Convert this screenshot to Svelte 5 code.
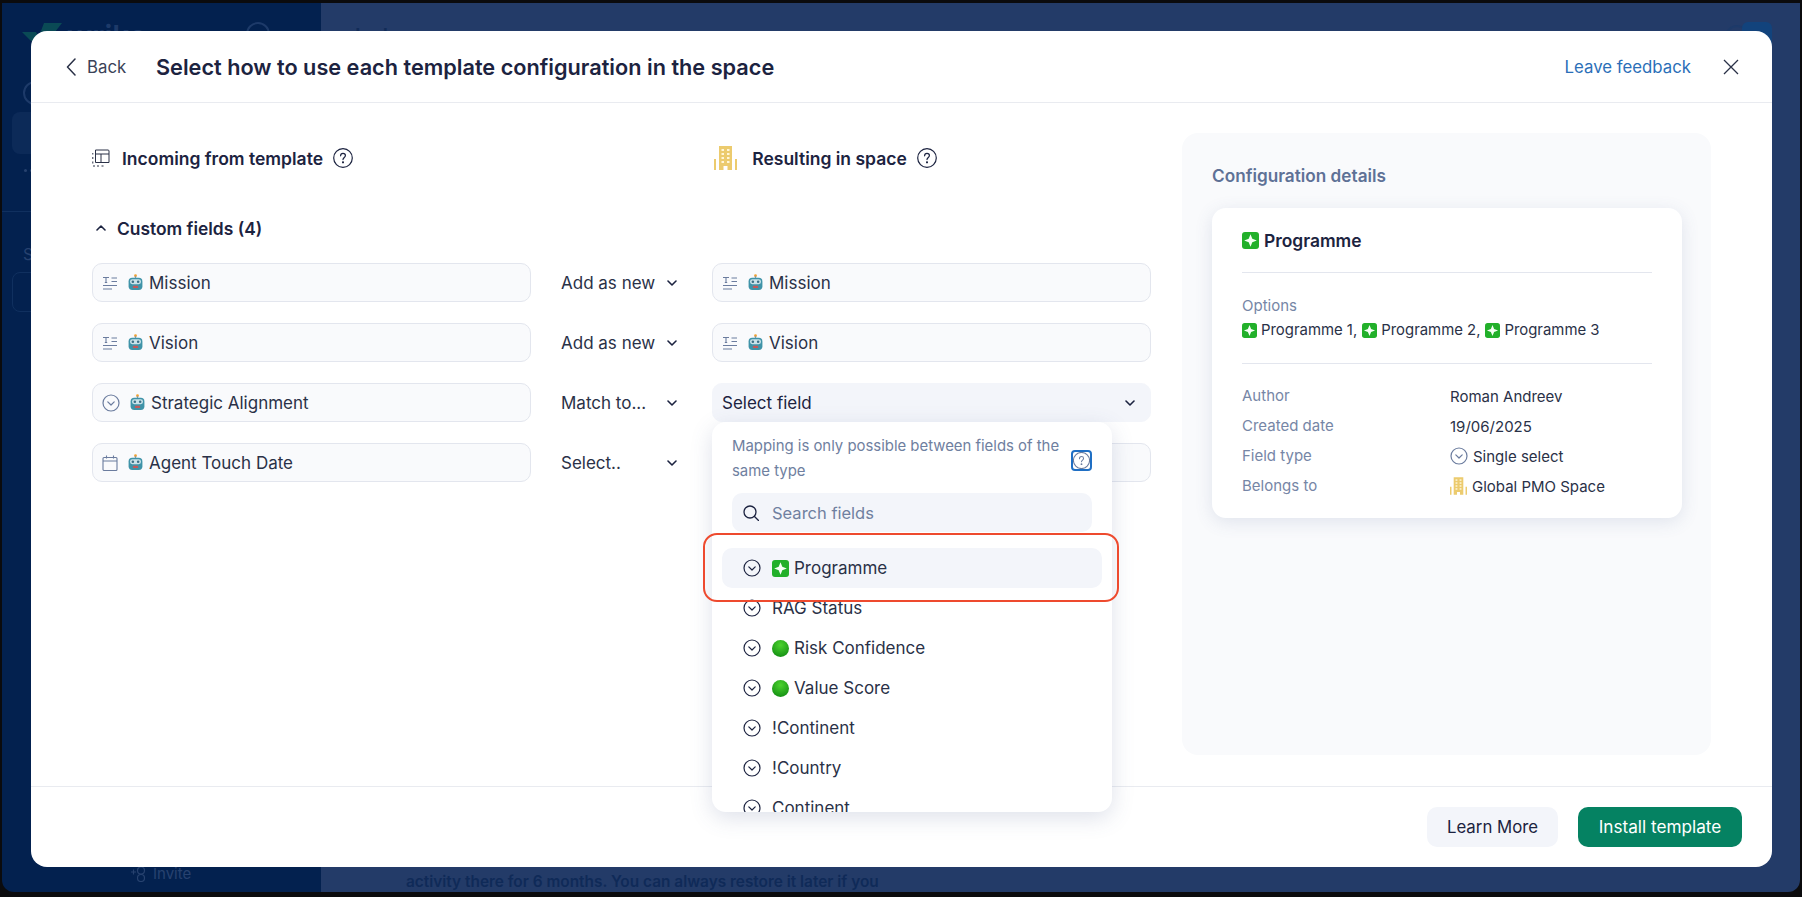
<script lang="ts">
  type Field = { name: string, kind: string, action: string };

  const fields: Field[] = [
    { name: "Mission", kind: "text", action: "Add as new" },
    { name: "Vision", kind: "text", action: "Add as new" },
    { name: "Strategic Alignment", kind: "select", action: "Match to..." },
    { name: "Agent Touch Date", kind: "date", action: "Select.." }
  ];

  const options = [
    { label: "Programme", emoji: "spark", active: true },
    { label: "RAG Status", emoji: "" },
    { label: "Risk Confidence", emoji: "dot" },
    { label: "Value Score", emoji: "dot" },
    { label: "!Continent", emoji: "" },
    { label: "!Country", emoji: "" },
    { label: "Continent", emoji: "" }
  ];

  const details = [
    { label: "Author", value: "Roman Andreev" },
    { label: "Created date", value: "19/06/2025" },
    { label: "Field type", value: "Single select", icon: "select" },
    { label: "Belongs to", value: "Global PMO Space", icon: "building" }
  ];
</script>

{#snippet robot()}
  <svg class="emoji" viewBox="0 0 16 16" width="17" height="17">
    <circle cx="8" cy="1.6" r="1.3" fill="#f0a030"/>
    <rect x="7.4" y="2" width="1.2" height="2" fill="#8a99a8"/>
    <rect x="1.5" y="3.6" width="13" height="11.4" rx="3.4" fill="#3f93a8"/>
    <rect x="2.8" y="5" width="10.4" height="4.6" rx="2.2" fill="#c9e3ea"/>
    <circle cx="5.5" cy="7.3" r="1.2" fill="#3b6f86"/>
    <circle cx="10.5" cy="7.3" r="1.2" fill="#3b6f86"/>
    <rect x="5.5" y="11" width="5" height="2.2" rx="0.8" fill="#c4595a"/>
  </svg>
{/snippet}

{#snippet spark(size)}
  <svg class="emoji" viewBox="0 0 17 17" width={size} height={size}>
    <rect width="17" height="17" rx="3" fill="#22b02a"/>
    <path d="M8.5 2.2 L10.3 6.7 L14.8 8.5 L10.3 10.3 L8.5 14.8 L6.7 10.3 L2.2 8.5 L6.7 6.700 Z" fill="#f4fff4"/>
  </svg>
{/snippet}

{#snippet dot()}
  <svg class="emoji" viewBox="0 0 17 17" width="17" height="17">
    <defs>
      <radialGradient id="dotfill" cx="50%" cy="30%" r="75%">
        <stop offset="0" stop-color="#4cd32e"/>
        <stop offset="1" stop-color="#118c12"/>
      </radialGradient>
    </defs>
    <circle cx="8.5" cy="8.5" r="8.5" fill="url(#dotfill)"/>
  </svg>
{/snippet}

{#snippet building(w, h)}
  <svg class="emoji" viewBox="0 0 23 24" width={w} height={h}>
    <path fill="#eccb6e" d="M5 0h13v24h-4.500v-4h-4v4H5z"/>
    <path fill="#eccb6e" d="M0 13h2v11H0zM21 13h2v11h-2z"/>
    <g fill="#fff6d8">
      <rect x="7.500" y="3" width="2.500" height="2"/><rect x="13" y="3" width="2.500" height="2"/>
      <rect x="7.500" y="7" width="2.500" height="2"/><rect x="13" y="7" width="2.500" height="2"/>
      <rect x="7.500" y="11" width="2.500" height="2"/><rect x="13" y="11" width="2.500" height="2"/>
      <rect x="7.500" y="15" width="2.500" height="2"/><rect x="13" y="15" width="2.500" height="2"/>
    </g>
  </svg>
{/snippet}

{#snippet selectIcon(color)}
  <svg class="emoji" viewBox="0 0 18 18" width="18" height="18" fill="none" stroke={color} stroke-width="1.200">
    <circle cx="9" cy="9" r="8"/>
    <path d="M5.800 7.800 L9 11 L12.200 7.800" stroke-linecap="round" stroke-linejoin="round"/>
  </svg>
{/snippet}

{#snippet kindIcon(kind)}
  {#if kind == "text"}
    <svg class="emoji" viewBox="0 0 16 16" width="16" height="16" fill="none" stroke="#6b7c9e" stroke-width="1.100">
      <path d="M1 2.500h6M4 2.500v5M2.800 7.500h2.400M9.500 3h5.500M9.500 6.500h5.500M1 10.500h14M1 14h9"/>
    </svg>
  {:else if kind == "select"}
    {@render selectIcon("#6b7c9e")}
  {:else}
    <svg class="emoji" viewBox="0 0 16 16" width="16" height="16" fill="none" stroke="#6b7c9e" stroke-width="1.100">
      <rect x="1" y="2.500" width="14" height="13" rx="1"/>
      <path d="M1 6h14M4.500 0.500v3M11.500 0.500v3"/>
    </svg>
  {/if}
{/snippet}

{#snippet chevron()}
  <svg class="chev" viewBox="0 0 10 6" width="10" height="6" fill="none" stroke="#1c2340" stroke-width="1.600">
    <path d="M1 1 L5 5 L9 1" stroke-linecap="round" stroke-linejoin="round"/>
  </svg>
{/snippet}

{#snippet help(size)}
  <svg class="emoji help" viewBox="0 0 20 20" width={size} height={size} fill="none" stroke="#1c2340" stroke-width="1.200">
    <circle cx="10" cy="10" r="9.300"/>
    <path d="M7.600 7.800 C7.600 6.200 8.800 5.400 10 5.400 C11.300 5.400 12.400 6.300 12.400 7.600 C12.400 9.400 10 9.500 10 11.600" stroke-linecap="round"/>
    <circle cx="10" cy="14.300" r="0.500" fill="#1c2340"/>
  </svg>
{/snippet}

<div class="screen">
  <div class="desktop">
    <aside class="sidebar">
      <svg class="check" viewBox="0 0 40 18" width="40" height="18"><path d="M0 9h14l5 9H9zM22 0h18L26 18h-6l-3-5z" fill="#0a4a55"/></svg>
      <span class="wordmark">wrike</span>
      <span class="ghost-circle top-icon"></span>
      <span class="ghost-circle side-circle"></span>
      <div class="side-bell"></div>
      <div class="side-dots"></div>
      <div class="side-rule"></div>
      <span class="side-s">S</span>
      <div class="side-box"></div>
      <div class="side-invite">
        <svg viewBox="0 0 16 16" width="16" height="16" fill="none" stroke="#27426f" stroke-width="1.200">
          <path d="M0 6h5M2.500 3.500v5"/>
          <circle cx="10" cy="4.500" r="3.500"/>
          <circle cx="10" cy="12" r="3.500"/>
        </svg>
        <span>Invite</span>
      </div>
    </aside>
    <main class="backdrop">
      <span class="crumb">Iob</span>
      <div class="notice">activity there for 6 months. You can always restore it later if you</div>
      <span class="ghost-circle top-help"></span>
      <div class="avatar"></div>
    </main>
  </div>

  <div class="modal">
    <header class="top">
      <button class="back">
        <svg viewBox="0 0 10 18" width="10" height="18" fill="none" stroke="#2a3147" stroke-width="1.500">
          <path d="M9 1 L1.500 9 L9 17" stroke-linecap="round" stroke-linejoin="round"/>
        </svg>
        <span>Back</span>
      </button>
      <h1>Select how to use each template configuration in the space</h1>
      <a class="feedback" href="#top">Leave feedback</a>
      <svg class="close" viewBox="0 0 16 16" width="16" height="16" fill="none" stroke="#2a3147" stroke-width="1.300">
        <path d="M1 1 L15 15 M15 1 L1 15"/>
      </svg>
    </header>

    <div class="body">
      <section class="mapping">
        <div class="heads">
          <div class="head">
            <svg class="emoji tpl" viewBox="0 0 18 18" width="18" height="18" fill="none" stroke="#2a3147" stroke-width="1">
              <path d="M3.500 1h12.500a1 1 0 0 1 1 1v11.500h-13.500zM3.500 5h13.500M9 5v8.500"/>
              <path d="M0.800 4v1.500M0.800 8v2M0.800 12.500v2M1 17h2M5 17h2M9.500 17h2" />
            </svg>
            <span>Incoming from template</span>
            {@render help(20)}
          </div>
          <div class="gap"></div>
          <div class="head result">
            {@render building(23, 24)}
            <span>Resulting in space</span>
            {@render help(20)}
          </div>
        </div>

        <div class="group">
          <svg viewBox="0 0 10 6" width="10" height="6" fill="none" stroke="#1c2340" stroke-width="1.600">
            <path d="M1 5 L5 1 L9 5" stroke-linecap="round" stroke-linejoin="round"/>
          </svg>
          <span>Custom fields (4)</span>
        </div>

        <div class="rows">
          {#each fields as f, i}
            <div class="row">
              <div class="field">
                {@render kindIcon(f.kind)}
                {@render robot()}
                <span>{f.name}</span>
              </div>
              <div class="action">
                <span>{f.action}</span>
                {@render chevron()}
              </div>
              {#if i == 2}
                <div class="field picker">
                  <span>Select field</span>
                  {@render chevron()}
                </div>
              {:else}
                <div class="field">
                  {#if i != 3}
                    {@render kindIcon(f.kind)}
                    {@render robot()}
                    <span>{f.name}</span>
                  {/if}
                </div>
              {/if}
            </div>
          {/each}
        </div>
      </section>

      <aside class="details">
        <h2>Configuration details</h2>
        <div class="card">
          <div class="card-title">
            {@render spark(17)}
            <span>Programme</span>
          </div>
          <div class="opts">
            <div class="label">Options</div>
            <div class="opt-line">
              {@render spark(15)}<span>Programme 1,</span>
              {@render spark(15)}<span>Programme 2,</span>
              {@render spark(15)}<span>Programme 3</span>
            </div>
          </div>
          <div class="meta">
            {#each details as d}
              <div class="label">{d.label}</div>
              <div class="value">
                {#if d.icon == "select"}
                  {@render selectIcon("#6b7c9e")}
                {:else if d.icon == "building"}
                  {@render building(17, 18)}
                {/if}
                <span>{d.value}</span>
              </div>
            {/each}
          </div>
        </div>
      </aside>
    </div>

    <footer class="bottom">
      <button class="btn ghost">Learn More</button>
      <button class="btn primary">Install template</button>
    </footer>

    <div class="dropdown">
      <div class="hint">
        <p>Mapping is only possible between fields of the same type</p>
        <span class="hint-help">
          <svg viewBox="0 0 20 20" width="17" height="17" fill="none" stroke="#6b7c9e" stroke-width="1.200">
            <circle cx="10" cy="10" r="9.500"/>
            <path d="M7.600 7.800 C7.600 6.200 8.800 5.400 10 5.400 C11.300 5.400 12.400 6.300 12.400 7.600 C12.400 9.400 10 9.500 10 11.600" stroke-linecap="round"/>
            <circle cx="10" cy="14.300" r="0.500" fill="#6b7c9e"/>
          </svg>
        </span>
      </div>
      <div class="search">
        <svg viewBox="0 0 16 16" width="16" height="16" fill="none" stroke="#1c2340" stroke-width="1.300">
          <circle cx="7" cy="7" r="6"/>
          <path d="M11.500 11.500 L15.500 15.500" stroke-linecap="round"/>
        </svg>
        <span>Search fields</span>
      </div>
      <div class="list">
        {#each options as o}
          <div class="option" class:active={o.active}>
            {@render selectIcon("#1c2340")}
            {#if o.emoji == "spark"}
              {@render spark(17)}
            {:else if o.emoji == "dot"}
              {@render dot()}
            {/if}
            <span>{o.label}</span>
          </div>
        {/each}
      </div>
    </div>

    <div class="callout"></div>
  </div>
</div>

<style>
  :global(body) {
    background: #0b0b0d;
    font-family: Inter, "Liberation Sans", sans-serif;
    overflow: hidden;
  }

  .screen {
    position: relative;
    width: 1802px;
    height: 897px;
    padding: 3px 2px 5px 2px;
    box-sizing: border-box;
    background: #0b0b0d;
  }

  .desktop {
    display: flex;
    height: 100%;
    border-radius: 0 0 12px 12px;
    overflow: hidden;
  }

  .sidebar {
    width: 319px;
    background: #03214f;
    position: relative;
    flex: none;
  }

  .check {
    position: absolute;
    left: 20px;
    top: 20px;
  }

  .wordmark {
    position: absolute;
    left: 65px;
    top: 18px;
    color: #1d3a69;
    font-size: 30px;
    font-weight: 600;
    line-height: 1;
  }

  .ghost-circle {
    position: absolute;
    width: 24px;
    height: 24px;
    box-sizing: border-box;
    border: 2px solid #1d3a69;
    border-radius: 50%;
  }

  .top-icon {
    left: 244px;
    top: 19px;
  }

  .side-circle {
    left: 21px;
    top: 78px;
  }

  .side-bell {
    position: absolute;
    left: 10px;
    top: 109px;
    width: 40px;
    height: 42px;
    border-radius: 8px;
    background: #0c2a58;
  }

  .side-dots {
    position: absolute;
    left: 22px;
    top: 166px;
    width: 3px;
    height: 3px;
    border-radius: 50%;
    background: #27426f;
    box-shadow: 6px 0 #27426f;
  }

  .side-rule {
    position: absolute;
    left: 0;
    top: 208px;
    width: 100%;
    height: 1px;
    background: #10305f;
  }

  .side-s {
    position: absolute;
    left: 21px;
    top: 241px;
    color: #27426f;
    font-size: 16px;
  }

  .side-box {
    position: absolute;
    left: 10px;
    top: 269px;
    width: 40px;
    height: 40px;
    box-sizing: border-box;
    border: 1px solid #10305f;
    border-radius: 8px;
  }

  .side-invite {
    position: absolute;
    left: 129px;
    top: 861px;
    display: flex;
    align-items: center;
    gap: 6px;
    color: #27426f;
    font-size: 15px;
  }

  .backdrop {
    flex: 1;
    background: #233b68;
    position: relative;
  }

  .crumb {
    position: absolute;
    left: 34px;
    top: 21px;
    color: #122c58;
    font-size: 20px;
    font-weight: 600;
    letter-spacing: 5px;
  }

  .notice {
    position: absolute;
    left: 85px;
    top: 869px;
    font-size: 15.400px;
    font-weight: 600;
    color: #0f2a58;
    white-space: nowrap;
  }

  .top-help {
    right: 51px;
    top: 22px;
  }

  .avatar {
    position: absolute;
    right: 28px;
    top: 19px;
    width: 30px;
    height: 30px;
    border-radius: 6px;
    background: #12437c;
  }

  .modal {
    position: absolute;
    left: 31px;
    top: 31px;
    width: 1741px;
    height: 836px;
    background: #fff;
    border-radius: 16px;
    display: flex;
    flex-direction: column;
    color: #1c2340;
    overflow: hidden;
  }

  .top {
    height: 71px;
    flex: none;
    display: flex;
    align-items: center;
    padding: 0 33px 0 35px;
    border-bottom: 1px solid #e9ebf0;
  }

  .back {
    display: flex;
    align-items: center;
    gap: 11px;
    border: 0;
    background: none;
    padding: 0;
    font: inherit;
    font-size: 16.800px;
    color: #3a4257;
    width: 90px;
  }

  h1 {
    margin: 0;
    font-size: 21.700px;
    font-weight: 600;
    color: #1c2340;
    flex: 1;
  }

  .feedback {
    color: #2b6fb8;
    font-size: 16.800px;
    text-decoration: none;
    margin-right: 32px;
  }

  .body {
    flex: 1;
    display: flex;
    min-height: 0;
    padding: 30px 61px 30px 61px;
    justify-content: space-between;
  }

  .mapping {
    width: 1059px;
    flex: none;
  }

  .heads {
    display: flex;
    align-items: center;
    height: 40px;
    margin-top: 5px;
  }

  .head {
    display: flex;
    align-items: center;
    width: 438px;
    font-size: 17.500px;
    font-weight: 600;
    gap: 11px;
    white-space: nowrap;
  }

  .head .tpl {
    margin-right: 1px;
  }

  .head .help {
    margin-left: -1px;
  }

  .gap {
    width: 182px;
  }

  .head.result {
    margin-left: 4px;
    gap: 15px;
  }

  .head.result .help {
    margin-left: -5px;
  }

  .group {
    display: flex;
    align-items: center;
    gap: 11px;
    margin-top: 38px;
    padding-left: 4px;
    font-size: 17.400px;
    font-weight: 600;
    height: 24px;
  }

  .rows {
    display: flex;
    flex-direction: column;
    gap: 21px;
    margin-top: 23px;
  }

  .row {
    display: flex;
    align-items: center;
    height: 39px;
  }

  .field {
    width: 439px;
    height: 39px;
    flex: none;
    box-sizing: border-box;
    display: flex;
    align-items: center;
    gap: 8px;
    padding: 0 10px 0 9px;
    background: #f9fafc;
    border: 1px solid #e3e6ee;
    border-radius: 10px;
    font-size: 17px;
    color: #2a3147;
  }

  .field .emoji + .emoji {
    margin-left: 1px;
  }

  .field span {
    margin-left: -3px;
  }

  .picker {
    justify-content: space-between;
    background: #f3f5fa;
    border-color: #f3f5fa;
    padding: 0 15px 0 9px;
    color: #1c2340;
  }

  .picker span {
    margin-left: 0;
  }

  .action {
    width: 181px;
    flex: none;
    box-sizing: border-box;
    padding: 0 35px 0 30px;
    display: flex;
    justify-content: space-between;
    align-items: center;
    font-size: 17px;
    color: #2a3147;
    white-space: nowrap;
  }

  .emoji, .chev {
    flex: none;
    display: block;
  }

  .details {
    width: 529px;
    height: 622px;
    box-sizing: border-box;
    background: #f9fafc;
    border-radius: 16px;
    padding: 31px 29px 30px 30px;
    flex: none;
  }

  h2 {
    margin: 0 0 20px;
    font-size: 17.200px;
    line-height: 24px;
    font-weight: 600;
    color: #5e7196;
  }

  .card {
    background: #fff;
    border-radius: 14px;
    padding: 20px 30px 17px;
    box-shadow: 0 4px 18px rgba(70, 90, 140, 0.14);
  }

  .card-title {
    display: flex;
    align-items: center;
    gap: 5px;
    font-size: 17.400px;
    font-weight: 600;
    height: 24px;
    padding-bottom: 20px;
    border-bottom: 1px solid #e3e6ee;
  }

  .opts {
    padding: 21px 0 21px;
    border-bottom: 1px solid #e3e6ee;
  }

  .label {
    color: #7686a6;
    font-size: 15px;
    line-height: 24px;
  }

  .opt-line {
    display: flex;
    align-items: center;
    gap: 4px;
    font-size: 14.900px;
    line-height: 24px;
    color: #2a3147;
    white-space: nowrap;
  }

  .opt-line span {
    margin-right: 1px;
  }

  .meta {
    display: grid;
    grid-template-columns: 208px 1fr;
    grid-auto-rows: 30px;
    align-items: center;
    margin-top: 17px;
  }

  .value {
    display: flex;
    align-items: center;
    gap: 5px;
    font-size: 15px;
    color: #2a3147;
  }

  .bottom {
    height: 81px;
    flex: none;
    box-sizing: border-box;
    border-top: 1px solid #e9ebf0;
    display: flex;
    justify-content: flex-end;
    align-items: center;
    gap: 20px;
    padding: 0 30px 1px 0;
  }

  .btn {
    height: 40px;
    border: 0;
    border-radius: 10px;
    font: inherit;
    font-size: 17px;
  }

  .ghost {
    width: 131px;
    background: #f3f5fa;
    color: #1c2340;
    font-size: 16.800px;
  }

  .primary {
    width: 164px;
    background: #058262;
    color: #fff;
    font-size: 17.200px;
  }

  .dropdown {
    position: absolute;
    left: 681px;
    top: 391px;
    width: 400px;
    height: 390px;
    box-sizing: border-box;
    background: #fff;
    border-radius: 14px;
    box-shadow: 0 6px 22px rgba(70, 90, 140, 0.18);
    overflow: hidden;
    padding: 11px 10px 0;
  }

  .hint {
    display: flex;
    align-items: center;
    padding: 0 10px;
    height: 52px;
  }

  .hint p {
    margin: 0;
    width: 335px;
    font-size: 14.900px;
    line-height: 25px;
    color: #6f80a0;
  }

  .hint-help {
    width: 21px;
    height: 21px;
    margin-left: 4px;
    box-sizing: border-box;
    border: 2px solid #1f6fc4;
    border-radius: 4px;
    display: flex;
    align-items: center;
    justify-content: center;
    position: relative;
    top: 1px;
    flex: none;
  }

  .search {
    margin: 8px 10px 0;
    height: 39px;
    border-radius: 10px;
    background: #f3f5fa;
    display: flex;
    align-items: center;
    gap: 13px;
    padding: 0 11px;
    font-size: 16.500px;
    color: #6f80a0;
  }

  .list {
    margin-top: 16px;
  }

  .option {
    height: 40px;
    display: flex;
    align-items: center;
    gap: 11px;
    padding: 0 21px;
    border-radius: 10px;
    font-size: 17px;
    color: #2a3147;
  }

  .option .emoji + .emoji + span {
    margin-left: -6px;
  }

  .option.active {
    background: #f3f5fa;
  }

  .callout {
    position: absolute;
    left: 672px;
    top: 502px;
    width: 416px;
    height: 69px;
    box-sizing: border-box;
    border: 2px solid #ee4a2e;
    border-radius: 14px;
    pointer-events: none;
  }

  .close {
    flex: none;
  }
</style>
